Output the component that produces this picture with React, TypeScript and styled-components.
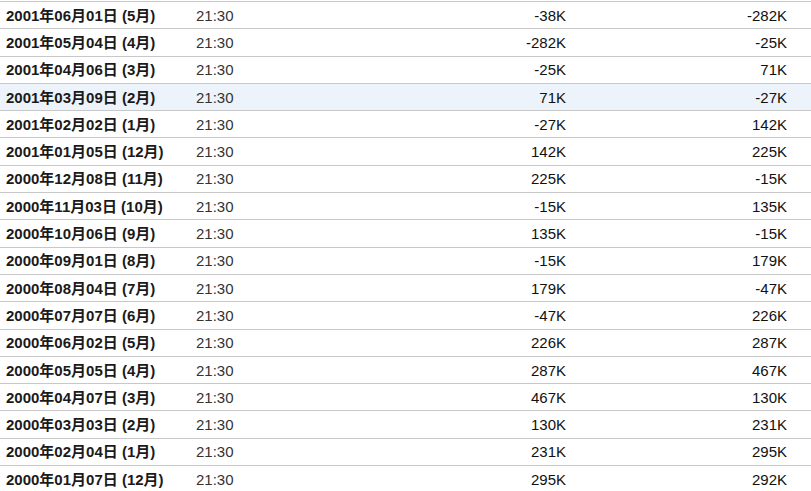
import React from 'react';
import styled, { createGlobalStyle } from 'styled-components';

const GlobalStyle = createGlobalStyle`
  html, body {
    margin: 0;
    padding: 0;
    background: #ffffff;
    overflow: hidden;
  }
`;

type Release = { date: string; time: string; actual: string; previous: string };

const rows: Release[] = [
  { date: '2001年06月01日 (5月)', time: '21:30', actual: '-38K', previous: '-282K' },
  { date: '2001年05月04日 (4月)', time: '21:30', actual: '-282K', previous: '-25K' },
  { date: '2001年04月06日 (3月)', time: '21:30', actual: '-25K', previous: '71K' },
  { date: '2001年03月09日 (2月)', time: '21:30', actual: '71K', previous: '-27K' },
  { date: '2001年02月02日 (1月)', time: '21:30', actual: '-27K', previous: '142K' },
  { date: '2001年01月05日 (12月)', time: '21:30', actual: '142K', previous: '225K' },
  { date: '2000年12月08日 (11月)', time: '21:30', actual: '225K', previous: '-15K' },
  { date: '2000年11月03日 (10月)', time: '21:30', actual: '-15K', previous: '135K' },
  { date: '2000年10月06日 (9月)', time: '21:30', actual: '135K', previous: '-15K' },
  { date: '2000年09月01日 (8月)', time: '21:30', actual: '-15K', previous: '179K' },
  { date: '2000年08月04日 (7月)', time: '21:30', actual: '179K', previous: '-47K' },
  { date: '2000年07月07日 (6月)', time: '21:30', actual: '-47K', previous: '226K' },
  { date: '2000年06月02日 (5月)', time: '21:30', actual: '226K', previous: '287K' },
  { date: '2000年05月05日 (4月)', time: '21:30', actual: '287K', previous: '467K' },
  { date: '2000年04月07日 (3月)', time: '21:30', actual: '467K', previous: '130K' },
  { date: '2000年03月03日 (2月)', time: '21:30', actual: '130K', previous: '231K' },
  { date: '2000年02月04日 (1月)', time: '21:30', actual: '231K', previous: '295K' },
  { date: '2000年01月07日 (12月)', time: '21:30', actual: '295K', previous: '292K' },
];

const Table = styled.div`
  width: 811px;
  padding-top: 1px;
  font-family: Arial, 'Liberation Sans', 'Noto Sans CJK SC', sans-serif;
  font-size: 15px;
  line-height: 17px;
  color: #222222;
`;

const Row = styled.div<{ $hover?: boolean }>`
  display: grid;
  grid-template-columns: 196px 140px 230px 1fr;
  align-items: center;
  box-sizing: border-box;
  height: 27.3px;
  padding-right: 24px;
  border-top: 1px solid #c8c8c8;
  background: ${(p) => (p.$hover ? '#edf3fa' : '#ffffff')};
`;

const DateCell = styled.div`
  padding-left: 6px;
  font-weight: bold;
  white-space: nowrap;
  color: #1a1a1a;
`;

const TimeCell = styled.div`
  color: #333333;
`;

const NumCell = styled.div`
  text-align: right;
  color: #111111;
`;

export default function App() {
  return (
    <>
      <GlobalStyle />
      <Table>
        {rows.map((r, i) => (
          <Row key={r.date} $hover={i === 3}>
            <DateCell>{r.date}</DateCell>
            <TimeCell>{r.time}</TimeCell>
            <NumCell>{r.actual}</NumCell>
            <NumCell>{r.previous}</NumCell>
          </Row>
        ))}
      </Table>
    </>
  );
}
